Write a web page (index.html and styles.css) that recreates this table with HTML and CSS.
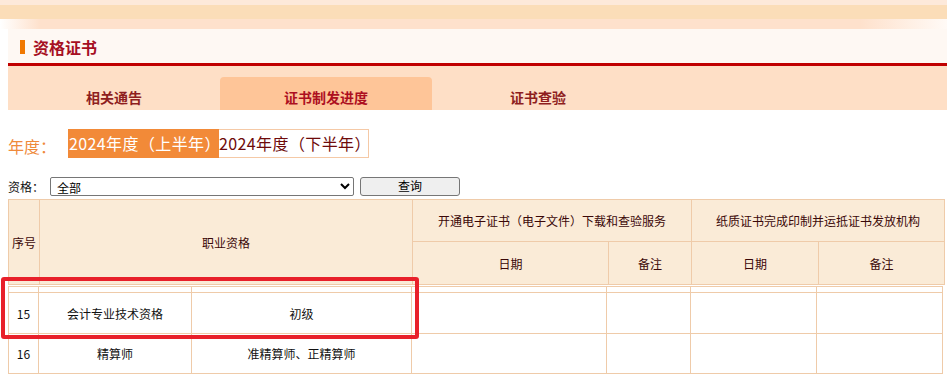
FILE: index.html
```html
<!DOCTYPE html>
<html lang="zh-CN">
<head>
<meta charset="utf-8">
<title>资格证书</title>
<link rel="stylesheet" href="styles.css">
</head>
<body>
<div class="top-band">
  <div class="band-a"></div>
  <div class="band-b"></div>
  <div class="band-c"></div>
</div>
<div class="page">
  <div class="panel">
    <div class="panel-title"><span class="title-bar"></span><span class="title-text">资格证书</span></div>
  </div>
  <div class="tabs">
    <div class="tab">相关通告</div>
    <div class="tab active">证书制发进度</div>
    <div class="tab">证书查验</div>
  </div>

  <div class="year-row">
    <span class="year-label">年度：</span>
    <span class="year-opt selected">2024年度（上半年）</span>
    <span class="year-opt">2024年度（下半年）</span>
  </div>

  <div class="filter-row">
    <span class="filter-label">资格：</span>
    <select class="filter-select"><option>全部</option></select>
    <button class="filter-btn" type="button">查询</button>
  </div>

  <div class="grid-wrap">
    <table class="grid head">
      <colgroup>
        <col class="c1"><col class="c2"><col class="c3"><col class="c4"><col class="c5"><col class="c6">
      </colgroup>
      <tr class="hr1">
        <th rowspan="2">序号</th>
        <th rowspan="2">职业资格</th>
        <th colspan="2">开通电子证书（电子文件）下载和查验服务</th>
        <th colspan="2">纸质证书完成印制并运抵证书发放机构</th>
      </tr>
      <tr class="hr2">
        <th>日期</th>
        <th>备注</th>
        <th>日期</th>
        <th>备注</th>
      </tr>
    </table>
    <table class="grid body">
      <colgroup>
        <col class="b1"><col class="b2"><col class="b3"><col class="b4"><col class="b5"><col class="b6"><col class="b7">
      </colgroup>
      <tr class="spacer"><td></td><td></td><td></td><td></td><td></td><td></td><td></td></tr>
      <tr class="r1">
        <td>15</td><td>会计专业技术资格</td><td>初级</td><td></td><td></td><td></td><td></td>
      </tr>
      <tr class="r2">
        <td>16</td><td>精算师</td><td>准精算师、正精算师</td><td></td><td></td><td></td><td></td>
      </tr>
    </table>
    <div class="highlight"></div>
  </div>
</div>
</body>
</html>
```

FILE: styles.css
```css
html, body {
  margin: 0;
  padding: 0;
  background: #ffffff;
  font-family: "Noto Sans CJK SC", "Microsoft YaHei", sans-serif;
}

/* decorative header band across the top */
.top-band {
  height: 29px;
  display: flex;
  flex-direction: column;
}
.band-a { height: 5px; background: #fde9da; }
.band-b { height: 14px; background: #fbddb8; }
.band-c {
  height: 10px;
  background: linear-gradient(to right, #ffffff 0px, #fee1cc 40px, #fee1cc 860px, #fffaf6 947px);
}

.page {
  padding-left: 8px;
}

/* section title */
.panel {
  background: #fef8f3;
  height: 34px;
  border-bottom: 3px solid #c00000;
  display: flex;
  align-items: center;
}
.panel-title {
  display: flex;
  align-items: center;
  padding-left: 12px;
  padding-top: 2px;
}
.title-bar {
  width: 5px;
  height: 14px;
  background: #f07800;
  margin-right: 8px;
}
.title-text {
  font-size: 16px;
  font-weight: bold;
  color: #a60f22;
  line-height: 20px;
}

/* tab strip */
.tabs {
  background: #fedfc6;
  height: 44px;
  display: flex;
  align-items: flex-end;
}
.tab {
  width: 212px;
  height: 26px;
  padding-top: 7px;
  text-align: center;
  font-size: 14px;
  font-weight: bold;
  line-height: 26px;
  color: #8e1e1e;
  border-radius: 4px 4px 0 0;
}
.tab.active {
  background: #fec598;
  color: #ad0f1f;
}

/* year selector */
.year-row {
  margin-top: 19px;
  display: flex;
  align-items: stretch;
  height: 29px;
}
.year-label {
  font-size: 16px;
  color: #ef8a3b;
  width: 60px;
  line-height: 35px;
}
.year-opt {
  width: 149px;
  border: 1px solid #f5c9a6;
  font-size: 16px;
  line-height: 27px;
  color: #6e0a0a;
  text-align: center;
  letter-spacing: 0.4px;
  white-space: nowrap;
}
.year-opt + .year-opt { border-left: none; width: 149px; }
.year-opt.selected {
  background: #f28a38;
  border-color: #f28a38;
  color: #ffffff;
}

/* filter */
.filter-row {
  margin-top: 18px;
  display: flex;
  align-items: center;
  height: 20px;
  font-size: 12px;
}
.filter-label {
  width: 42px;
  color: #111111;
}
.filter-select {
  width: 304px;
  height: 19px;
  font-size: 12px;
  font-family: "Noto Sans CJK SC", sans-serif;
  padding: 0 2px;
  margin: 0;
  border: 1px solid #767676;
  border-radius: 2px;
  background: #ffffff;
  color: #000000;
}
.filter-btn {
  margin: 0 0 0 6px;
  width: 100px;
  height: 19px;
  padding: 0;
  font-size: 12px;
  font-family: "Noto Sans CJK SC", sans-serif;
  line-height: 16px;
  color: #000000;
  background: #efefef;
  border: 1px solid #767676;
  border-radius: 3px;
}

/* progress table */
.grid-wrap {
  margin-top: 3px;
  position: relative;
}
.grid {
  border-collapse: collapse;
  table-layout: fixed;
  font-size: 12px;
}
.grid th, .grid td {
  border: 1px solid #efcba9;
  padding: 0;
  text-align: center;
  font-weight: normal;
}
.grid.head { width: 936px; }
.grid.head th {
  background: #faebd7;
  color: #3a0808;
}
.c1 { width: 31px; }
.c2 { width: 373px; }
.c3 { width: 196px; }
.c4 { width: 83px; }
.c5 { width: 127px; }
.c6 { width: 126px; }
.hr1 { height: 42px; }
.hr2 { height: 43px; }

.grid.body {
  width: 934px;
  margin-top: 1px;
}
.grid.body td { color: #111111; }
.b1 { width: 30px; }
.b2 { width: 153px; }
.b3 { width: 220px; }
.b4 { width: 195px; }
.b5 { width: 84px; }
.b6 { width: 126px; }
.b7 { width: 126px; }
.spacer { height: 6px; }
.r1 { height: 41px; }
.r2 { height: 40px; }

/* red callout over the row */
.highlight {
  position: absolute;
  left: -7px;
  top: 78px;
  width: 410px;
  height: 54px;
  border: 4px solid #e8202a;
  border-radius: 3px;
}
```
